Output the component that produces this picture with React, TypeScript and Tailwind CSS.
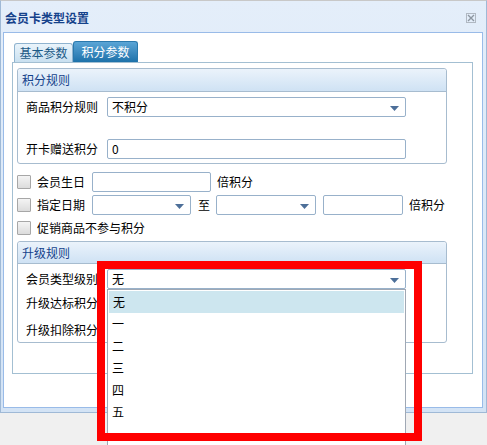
import React from "react";

const Arrow = () => (
  <svg width="9" height="5" viewBox="0 0 9 5" className="absolute right-[6px] top-[8px]">
    <path d="M0 0 H9 L4.5 5 Z" fill="#4d6f99" />
  </svg>
);

const Combo = ({ w, value }: { w: string; value?: string }) => (
  <div className={`relative h-[20px] ${w} border border-[#98b1ca] rounded-[2px] bg-white flex items-center pl-[4px] text-[12px] text-black`}>
    {value}
    <Arrow />
  </div>
);

const Input = ({ w, value }: { w: string; value?: string }) => (
  <div className={`h-[20px] ${w} border border-[#98b1ca] rounded-[2px] bg-white flex items-center pl-[4px] text-[12px] text-black`}>
    {value}
  </div>
);

const Check = () => (
  <div className="w-[14px] h-[14px] border border-[#a7a7a7] bg-gradient-to-b from-[#f4f4f4] to-[#dcdcdc] rounded-[1px] shrink-0" />
);

export default function App() {
  return (
    <div
      className="relative w-[487px] h-[445px] bg-[#f0f0f0] overflow-hidden text-[12px] text-black"
      style={{ fontFamily: '"Noto Sans CJK SC", "Noto Sans", sans-serif' }}
    >
      {/* Dialog frame */}
      <div className="w-[487px] h-[413px] border border-[#9fb9d6] border-t-[#c8c8c8] bg-gradient-to-b from-[#e4eefa] to-[#d3e3f5] flex flex-col">
        {/* Title bar */}
        <div className="h-[31px] flex items-center justify-between pl-[4px] pr-[10px] pt-[3px]">
          <span className="font-bold text-[12px] text-[#15428b]">会员卡类型设置</span>
          <svg width="10" height="10" viewBox="0 0 10 10">
            <rect x="0.5" y="0.5" width="9" height="9" fill="none" stroke="#b0b8c2" />
            <path d="M2 2 L8 8 M8 2 L2 8" stroke="#8d96a1" strokeWidth="1.4" />
          </svg>
        </div>
        {/* Body */}
        <div className="ml-[2px] w-[480px] h-[376px] border border-[#99bbe8] bg-white pl-[8px] pt-[8px]">
          {/* Tabs */}
          <div className="flex items-end pl-[2px] h-[21px]">
            <div className="h-[19px] w-[59px] border border-b-0 border-[#8fb3cf] rounded-t-[3px] bg-gradient-to-b from-[#eaf4fb] to-[#c9e0f0] text-[#1b5a86] text-[12px] flex items-center justify-center">
              基本参数
            </div>
            <div className="h-[21px] w-[65px] border border-b-0 border-[#2a79ad] rounded-t-[3px] bg-gradient-to-b from-[#5aa5d6] to-[#1c72aa] text-white text-[12px] flex items-center justify-center">
              积分参数
            </div>
          </div>
          {/* Tab panel */}
          <div className="w-[461px] h-[312px] border border-[#a3bfd2] pl-[4px] pt-[5px]">
            {/* Group 1 */}
            <div className="w-[430px] h-[96px] border border-[#a7bccf] rounded-[3px]">
              <div className="h-[23px] bg-gradient-to-b from-[#ebf3fb] to-[#cfe2f4] border-b border-[#a7bccf] flex items-center pl-[4px] text-[#15428b] text-[12px] rounded-t-[3px]">
                积分规则
              </div>
              <div className="pl-[8px] pt-[5px] flex flex-col">
                <div className="flex items-center h-[20px]">
                  <span className="w-[81px]">商品积分规则</span>
                  <Combo w="w-[299px]" value="不积分" />
                </div>
                <div className="flex items-center h-[20px] mt-[22px]">
                  <span className="w-[81px]">开卡赠送积分</span>
                  <Input w="w-[299px]" value="0" />
                </div>
              </div>
            </div>
            {/* Checkbox rows */}
            <div className="flex flex-col pt-[6px]">
              <div className="h-[23px] flex items-center">
                <Check />
                <span className="ml-[6px] w-[55px]">会员生日</span>
                <Input w="w-[119px]" />
                <span className="ml-[6px]">倍积分</span>
              </div>
              <div className="h-[23px] flex items-center">
                <Check />
                <span className="ml-[6px] w-[55px]">指定日期</span>
                <Combo w="w-[99px]" />
                <span className="ml-[7px] w-[18px]">至</span>
                <Combo w="w-[100px]" />
                <span className="w-[7px]" />
                <Input w="w-[80px]" />
                <span className="ml-[6px]">倍积分</span>
              </div>
              <div className="h-[23px] flex items-center">
                <Check />
                <span className="ml-[6px]">促销商品不参与积分</span>
              </div>
            </div>
            {/* Group 2 */}
            <div className="mt-[2px] w-[430px] h-[102px] border border-[#a7bccf] rounded-[3px]">
              <div className="h-[22px] bg-gradient-to-b from-[#ebf3fb] to-[#cfe2f4] border-b border-[#a7bccf] flex items-center pl-[4px] text-[#15428b] text-[12px] rounded-t-[3px]">
                升级规则
              </div>
              <div className="pl-[8px] pt-[4px] flex flex-col">
                <div className="flex items-center h-[21px]">
                  <span className="w-[81px]">会员类型级别</span>
                  <Combo w="w-[299px]" value="无" />
                </div>
                <div className="flex items-center h-[22px] mt-[3px]">
                  <span className="w-[81px]">升级达标积分</span>
                </div>
                <div className="flex items-center h-[22px] mt-[5px]">
                  <span className="w-[81px]">升级扣除积分</span>
                </div>
              </div>
            </div>
          </div>
        </div>
      </div>

      {/* Dropdown list overlay */}
      <div className="absolute left-[107px] top-[289px] w-[299px] h-[160px] bg-white border border-[#a0a8b4] pt-[1px] flex flex-col text-[12px]">
        <div className="h-[22px] bg-[#cde6ef] flex items-center pl-[4px] mx-[1px]">无</div>
        <div className="h-[22px] flex items-center pl-[4px]">一</div>
        <div className="h-[22px] flex items-center pl-[4px]">二</div>
        <div className="h-[22px] flex items-center pl-[4px]">三</div>
        <div className="h-[22px] flex items-center pl-[4px]">四</div>
        <div className="h-[22px] flex items-center pl-[4px]">五</div>
      </div>

      {/* Red highlight */}
      <div className="absolute left-[97px] top-[261px] w-[325px] h-[180px] border-[8px] border-[#ff0000]" />
    </div>
  );
}
